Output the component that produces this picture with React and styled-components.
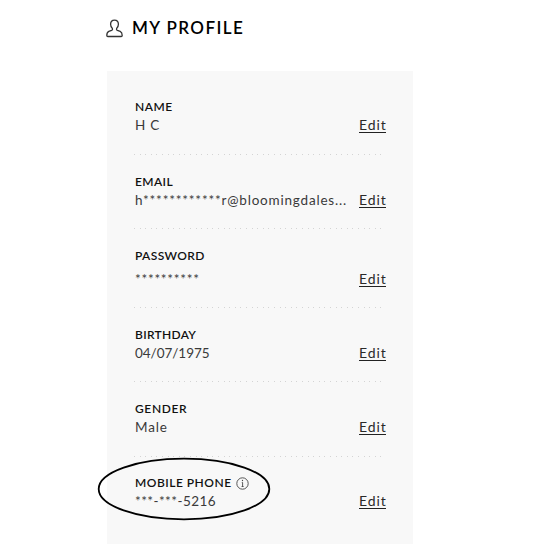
import React from 'react';
import styled, { createGlobalStyle } from 'styled-components';

const GlobalStyle = createGlobalStyle`
  * { box-sizing: border-box; }
  body {
    margin: 0;
    background: #fff;
    color: #111;
    font-family: Lato, "Open Sans", sans-serif;
  }
`;

const Page = styled.main`
  position: relative;
  height: 558px;
  padding: 16px 0 0 106px;
  overflow: hidden;
`;

const Header = styled.header`
  display: flex;
  align-items: center;
  height: 24px;
`;

const Title = styled.h1`
  margin: 0 0 0 9px;
  font-size: 17px;
  line-height: 24px;
  font-weight: 600;
  letter-spacing: 1.4px;
  color: #000;
`;

const Card = styled.section`
  width: 306.5px;
  height: 473px;
  margin: 31px 0 0 0.5px;
  padding: 9px 27px 0 27.5px;
  background: #f8f8f8;
`;

const Row = styled.div`
  display: flex;
  flex-direction: column;
  height: ${(p) => p.$height}px;
  padding: ${(p) => (p.$divided ? 18 : 17)}px 0 0 1px;
  background: ${(p) =>
    p.$divided
      ? 'repeating-linear-gradient(90deg, #d4d4d4 0 1px, transparent 1px 5.6px) 0 100% / 247px 1px no-repeat'
      : 'none'};
`;

const Label = styled.div`
  display: flex;
  align-items: center;
  gap: 4px;
  height: 18px;
  font-size: 12px;
  line-height: 18px;
  font-weight: 600;
  letter-spacing: ${(p) => p.$spacing}px;
  white-space: nowrap;
`;

const Line = styled.div`
  display: flex;
  justify-content: space-between;
  margin-top: ${(p) => p.$gap}px;
  font-size: 13.5px;
  line-height: 18px;
  color: #3a3a3a;
`;

const Value = styled.span`
  letter-spacing: ${(p) => p.$spacing}px;
  white-space: nowrap;
`;

const EditLink = styled.a`
  flex: none;
  width: 27px;
  height: 17px;
  border-bottom: 1px solid #222;
  font-size: 14px;
  line-height: 18px;
  letter-spacing: 0.9px;
  color: #2a2a2a;
`;

const Ellipse = styled.svg`
  position: absolute;
  left: 97px;
  top: 457px;
`;

const PersonIcon = () => (
  <svg width="17" height="19" viewBox="0 0 17 19" fill="none" stroke="#333" strokeWidth="1.3" strokeLinejoin="round">
    <path d="M8.5 1.1C6 1.1 4.6 2.9 4.6 5.3C4.6 7.1 5.4 8.6 6.4 9.5C6.8 10.5 6.3 11.1 5.6 11.4L2.8 12.4C1.4 13 .8 14.3.8 16.4Q.8 17.5 1.8 17.5H15.2Q16.2 17.5 16.2 16.4C16.2 14.3 15.6 13 14.2 12.4L11.4 11.4C10.7 11.1 10.2 10.5 10.6 9.5C11.6 8.6 12.4 7.1 12.4 5.3C12.4 2.9 11 1.1 8.5 1.1Z" />
  </svg>
);

const InfoIcon = () => (
  <svg width="13" height="13" viewBox="0 0 13 13" fill="none" stroke="#444" strokeWidth="0.9">
    <circle cx="6.5" cy="6.5" r="5.7" />
    <path d="M5.8 5.5H6.6V9.5M5.6 9.5H7.6" />
    <circle cx="6.5" cy="3.5" r=".65" fill="#444" stroke="none" />
  </svg>
);

const fields = [
  { label: 'NAME', ls: 0.5, value: 'H C', vs: 0.8, height: 75 },
  { label: 'EMAIL', ls: 0.4, value: 'h************r@bloomingdales...', vs: 0.8, height: 74 },
  { label: 'PASSWORD', ls: 0.38, value: '**********', vs: 0.73, height: 79, gap: 5 },
  { label: 'BIRTHDAY', ls: 0.3, value: '04/07/1975', vs: -0.03, height: 74 },
  { label: 'GENDER', ls: 0.62, value: 'Male', vs: 0.8, height: 75 },
  { label: 'MOBILE PHONE', ls: 0.5, value: '***-***-5216', vs: 0.43, height: 74, info: true },
];

export default function App() {
  return (
    <>
      <GlobalStyle />
      <Page>
        <Header>
          <PersonIcon />
          <Title>MY PROFILE</Title>
        </Header>
        <Card>
          {fields.map((f, i) => (
            <Row key={f.label} $height={f.height} $divided={i < fields.length - 1}>
              <Label $spacing={f.ls}>
                {f.label}
                {f.info && <InfoIcon />}
              </Label>
              <Line $gap={f.gap || 0}>
                <Value $spacing={f.vs}>{f.value}</Value>
                <EditLink>Edit</EditLink>
              </Line>
            </Row>
          ))}
        </Card>
        <Ellipse width="174" height="64" viewBox="0 0 174 64" fill="none">
          <ellipse cx="87" cy="32" rx="85.3" ry="30.3" stroke="#000" strokeWidth="1.8" />
        </Ellipse>
      </Page>
    </>
  );
}
